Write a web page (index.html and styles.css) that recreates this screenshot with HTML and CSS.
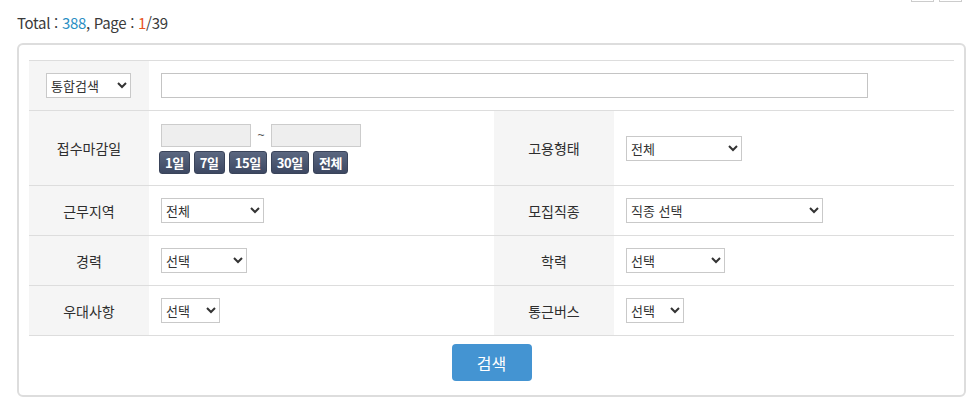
FILE: index.html
```html
<!DOCTYPE html>
<html lang="ko">
<head>
<meta charset="utf-8">
<title>채용정보 검색</title>
<link rel="stylesheet" href="styles.css">
</head>
<body>
<div class="page">
  <div class="topbar">
    <p class="total">Total : <span class="num-blue">388</span>, Page : <span class="num-red">1</span>/39</p>
    <div class="pager">
      <button type="button" class="pager-btn"></button>
      <button type="button" class="pager-btn"></button>
    </div>
  </div>

  <form class="search-box">
    <div class="grid">
      <div class="th th-first">
        <select class="sel sel-kind"><option>통합검색</option></select>
      </div>
      <div class="td td-wide">
        <input type="text" class="text-input">
      </div>

      <div class="th">접수마감일</div>
      <div class="td">
        <div class="date-col">
          <div class="date-range">
            <input type="text" class="date-input">
            <span class="tilde">~</span>
            <input type="text" class="date-input">
          </div>
          <div class="date-btns">
            <button type="button" class="dbtn">1일</button>
            <button type="button" class="dbtn">7일</button>
            <button type="button" class="dbtn">15일</button>
            <button type="button" class="dbtn">30일</button>
            <button type="button" class="dbtn">전체</button>
          </div>
        </div>
      </div>
      <div class="th">고용형태</div>
      <div class="td">
        <select class="sel w116"><option>전체</option></select>
      </div>

      <div class="th">근무지역</div>
      <div class="td"><select class="sel w103"><option>전체</option></select></div>
      <div class="th">모집직종</div>
      <div class="td"><select class="sel w197"><option>직종 선택</option></select></div>

      <div class="th">경력</div>
      <div class="td"><select class="sel w86"><option>선택</option></select></div>
      <div class="th">학력</div>
      <div class="td"><select class="sel w99"><option>선택</option></select></div>

      <div class="th">우대사항</div>
      <div class="td"><select class="sel w59"><option>선택</option></select></div>
      <div class="th">통근버스</div>
      <div class="td"><select class="sel w58"><option>선택</option></select></div>
    </div>
    <div class="actions">
      <button type="submit" class="search-btn">검색</button>
    </div>
  </form>
</div>
</body>
</html>
```

FILE: styles.css
```css
* {
  box-sizing: border-box;
}

html, body {
  margin: 0;
  padding: 0;
  background: #ffffff;
}

body {
  font-family: "Noto Sans CJK KR", "Noto Sans", sans-serif;
  color: #333;
}

.page {
  padding: 0 9px 0 17px;
}

.topbar {
  height: 43px;
  display: flex;
  justify-content: space-between;
  align-items: flex-start;
}

.total {
  margin: 0;
  padding-top: 12px;
  font-size: 15px;
  line-height: 22px;
  color: #3a3a3a;
  letter-spacing: -0.3px;
}

.num-blue {
  color: #2a8fc4;
}

.num-red {
  color: #e8541d;
}

.pager {
  display: flex;
  gap: 5px;
  margin-top: -21px;
  margin-right: 4px;
}

.pager-btn {
  width: 23px;
  height: 23px;
  padding: 0;
  border: 1px solid #ccc;
  background: #fff;
}

.search-box {
  margin: 0;
  border: 2px solid #ddd;
  border-radius: 6px;
  padding: 15px 10px 14px 10px;
}

.grid {
  display: grid;
  grid-template-columns: 120px 345px 120px 1fr;
  grid-template-rows: 50px 75px 50px 50px 50px;
  border-top: 1px solid #ddd;
}

.th, .td {
  border-bottom: 1px solid #ddd;
  display: flex;
  align-items: center;
}

.th {
  background: #f5f5f5;
  justify-content: center;
  font-size: 14px;
  color: #2e2e2e;
}

.th-first {
  justify-content: flex-start;
  padding-left: 17px;
}

.td {
  padding-left: 12px;
  background: #fff;
}

.td-wide {
  grid-column: 2 / 5;
}

.sel {
  height: 25px;
  border: 1px solid #c9c9c9;
  border-radius: 0;
  background-color: #fff;
  font-family: "Noto Sans CJK KR", "Noto Sans", sans-serif;
  font-size: 13px;
  color: #333;
  padding: 0;
}

.sel-kind { width: 85px; }
.w116 { width: 116px; }
.w103 { width: 103px; }
.w197 { width: 197px; }
.w86 { width: 86px; }
.w99 { width: 99px; }
.w59 { width: 59px; }
.w58 { width: 58px; }

.text-input {
  width: 707px;
  height: 25px;
  border: 1px solid #c4c4c4;
  background: #fff;
}

.date-col {
  display: flex;
  flex-direction: column;
  gap: 4px;
  padding-top: 1px;
}

.date-range {
  display: flex;
  align-items: center;
}

.date-input {
  width: 90px;
  height: 23px;
  border: 1px solid #ccc;
  background: #eee;
}

.tilde {
  width: 20px;
  text-align: center;
  font-family: "Liberation Sans", sans-serif;
  font-size: 12px;
  color: #555;
}

.date-btns {
  display: flex;
  gap: 4px;
  margin-left: -2px;
}

.dbtn {
  height: 23px;
  padding: 0 5px;
  border: 1px solid #3a445a;
  border-radius: 3px;
  background: linear-gradient(#5b6780, #3d4862);
  color: #fff;
  font-family: "Noto Sans CJK KR", "Noto Sans", sans-serif;
  font-weight: bold;
  font-size: 13px;
  line-height: 21px;
  letter-spacing: -0.4px;
}

.actions {
  display: flex;
  justify-content: center;
  padding-top: 8px;
}

.search-btn {
  width: 80px;
  height: 37px;
  border: 0;
  border-radius: 4px;
  background: #4494d2;
  color: #fff;
  font-family: "Noto Sans CJK KR", "Noto Sans", sans-serif;
  font-size: 16px;
}
```
